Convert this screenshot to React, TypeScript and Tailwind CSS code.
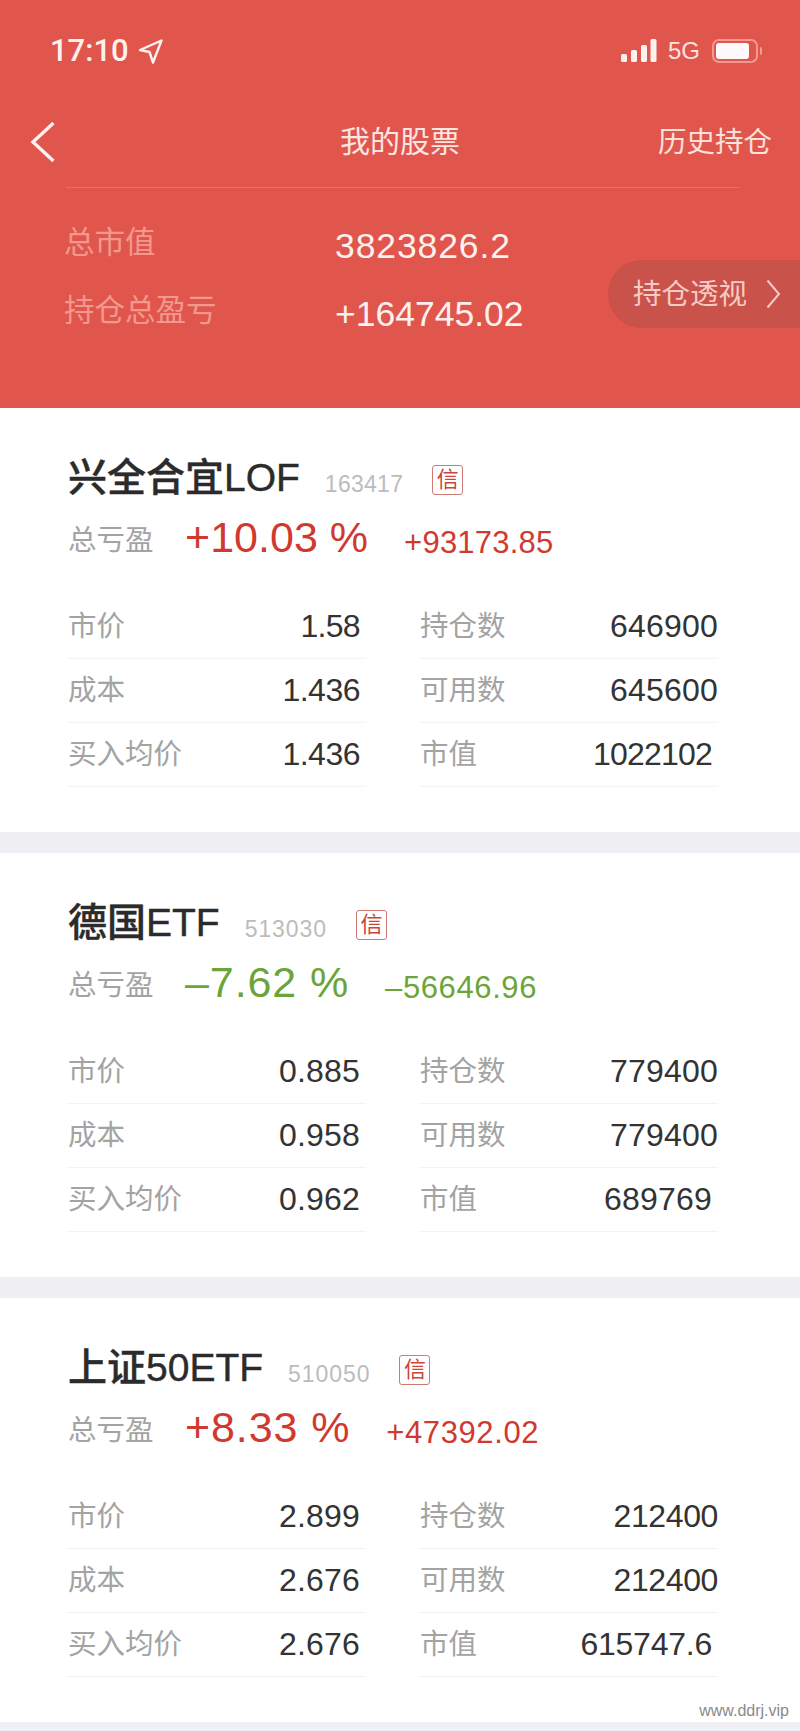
const FONT = "font-['Liberation_Sans','Noto_Sans_CJK_SC',sans-serif]";

type Stock = {
  name: string;
  code: string;
  pct: string;
  amount: string;
  up: boolean;
  rows: [string, string, string, string][];
};

const stocks: Stock[] = [
  {
    name: "兴全合宜LOF",
    code: "163417",
    pct: "+10.03 %",
    amount: "+93173.85",
    up: true,
    rows: [
      ["市价", "1.58", "持仓数", "646900"],
      ["成本", "1.436", "可用数", "645600"],
      ["买入均价", "1.436", "市值", "1022102"],
    ],
  },
  {
    name: "德国ETF",
    code: "513030",
    pct: "–7.62 %",
    amount: "–56646.96",
    up: false,
    rows: [
      ["市价", "0.885", "持仓数", "779400"],
      ["成本", "0.958", "可用数", "779400"],
      ["买入均价", "0.962", "市值", "689769"],
    ],
  },
  {
    name: "上证50ETF",
    code: "510050",
    pct: "+8.33 %",
    amount: "+47392.02",
    up: true,
    rows: [
      ["市价", "2.899", "持仓数", "212400"],
      ["成本", "2.676", "可用数", "212400"],
      ["买入均价", "2.676", "市值", "615747.6"],
    ],
  },
];

// the phone font has a narrow 1, Liberation's digits are all one width,
// so each number gets its spacing from how many 1s it holds
function Num({ value, base, one, className }: { value: string; base: number; one: number; className: string }) {
  const ones = value.split("1").length - 1;
  return (
    <span className={className} style={{ letterSpacing: base - (ones * one) / value.length }}>
      {value}
    </span>
  );
}

function StatusBar() {
  return (
    <div className="flex h-[70px] items-end justify-between pl-[50px] pr-[38px] pb-[7px]">
      <div className="mb-[-4px] flex items-center gap-[9px]">
        <span className="font-['Roboto',sans-serif] text-[31px] leading-[32px] font-medium text-[#fdf1ef]">17:10</span>
        <svg width="25" height="25" viewBox="0 0 25 25" fill="none">
          <path d="M23.5 1.5 L2 11 L11.5 13 L15 23.5 Z" stroke="#fdf1ef" strokeWidth="2.4" strokeLinejoin="round" />
        </svg>
      </div>
      <div className="flex items-center">
        <svg width="36" height="24" viewBox="0 0 36 24" fill="#fdf1ef">
          <rect x="0" y="15" width="6" height="8" rx="1.5" />
          <rect x="10" y="11" width="6" height="12" rx="1.5" />
          <rect x="20" y="6" width="6" height="17" rx="1.5" />
          <rect x="29.5" y="0" width="6" height="23" rx="1.5" />
        </svg>
        <span className="ml-[11px] text-[24px] leading-[24px] text-[#fbe3e0]">5G</span>
        <div className="ml-[12px] flex items-center">
          <div className="h-[24px] w-[46px] rounded-[7px] border-2 border-[#f29a92] p-[2px]">
            <div className="h-full w-[33px] rounded-[3px] bg-[#fffafa]" />
          </div>
          <div className="ml-[2px] h-[8px] w-[2px] rounded-r bg-[#f29a92]" />
        </div>
      </div>
    </div>
  );
}

function Header() {
  return (
    <div className="h-[408px] bg-[#e0564c]">
      <StatusBar />
      <div className="flex h-[117px] items-center justify-between pl-[30px] pr-[28px] pt-[27px]">
        <svg width="26" height="42" viewBox="0 0 26 42" fill="none">
          <path d="M23.5 2 L3 21 L23.5 40" stroke="#fdf1ef" strokeWidth="3.4" />
        </svg>
        <span className="ml-[86px] text-[30px] leading-[40px] text-[#fbe6e3]">我的股票</span>
        <span className="text-[28.5px] leading-[40px] text-[#fbe0dc]">历史持仓</span>
      </div>
      <div className="mx-[66px] h-px w-[674px] bg-[#e76f65]" />
      <div className="flex items-start justify-between pt-[34px] pl-[64px]">
        <div className="flex">
          <div className="flex w-[271px] flex-col gap-[28px] text-[30.5px] leading-[40px] text-[#f3988f]">
            <span>总市值</span>
            <span>持仓总盈亏</span>
          </div>
          <div className="flex flex-col gap-[28px] pt-[4px] text-[35.5px] leading-[40px] text-[#fdf1ef]">
            <Num value="3823826.2" base={0.9} one={9} className="" />
            <Num value="+164745.02" base={0.9} one={9} className="" />
          </div>
        </div>
        <div className="mt-[38px] flex h-[68px] w-[192px] items-center rounded-l-[34px] border border-r-0 border-[#d24e45] bg-[#c9524a] pl-[24px]">
          <span className="text-[28.5px] leading-[36px] text-[#f6cbc6]">持仓透视</span>
          <svg className="ml-[19px]" width="15" height="30" viewBox="0 0 15 30" fill="none">
            <path d="M1.5 1.5 L13 15 L1.5 28.5" stroke="#f6cbc6" strokeWidth="2" />
          </svg>
        </div>
      </div>
    </div>
  );
}

function Cell({ label, value, pad }: { label: string; value: string; pad: boolean }) {
  return (
    <div className="flex h-16 items-center justify-between border-b border-[#f3f3f3] pb-[2px] pl-px">
      <span className="text-[28.5px] leading-[36px] text-[#a3a3a3]">{label}</span>
      <Num
        value={value}
        base={0.2}
        one={3.5}
        className={`text-[32px] leading-[36px] text-[#333333] ${pad ? "pr-[6px]" : ""}`}
      />
    </div>
  );
}

function StockCard({ stock }: { stock: Stock }) {
  const tone = stock.up ? "text-[#d0392f]" : "text-[#6ba539]";
  return (
    <div className="h-[424px] bg-white pl-[67px] pr-[82px] pt-[47px]">
      <div className="flex h-[46px] items-center pl-px">
        <span className="text-[39px] leading-[46px] font-medium text-[#2b2b2b] [-webkit-text-stroke:0.4px_#2b2b2b]">
          {stock.name}
        </span>
        <Num
          value={stock.code}
          base={1.6}
          one={4}
          className="ml-[25px] mt-[12px] text-[23px] leading-[30px] text-[#bcbcbc]"
        />
        <span className="ml-[29px] mt-[3px] flex h-[30px] w-[31px] items-center justify-center rounded-[3px] border border-[#cf7a72] text-[22px] leading-[28px] text-[#c9463c]">
          信
        </span>
      </div>
      <div className="mt-[11px] flex h-[50px] items-center pl-px">
        <span className="mt-[5px] w-[117px] text-[28.5px] leading-[36px] text-[#a3a3a3]">总亏盈</span>
        <Num value={stock.pct} base={0.9} one={7} className={`text-[43px] leading-[50px] ${tone}`} />
        <Num
          value={stock.amount}
          base={0.6}
          one={3.5}
          className={`ml-[36px] mt-[12px] text-[31px] leading-[36px] ${tone}`}
        />
      </div>
      <div className="mt-[33px] grid grid-cols-[299px_299px] gap-x-[53px]">
        {stock.rows.map((r, i) => (
          <div key={r[0]} className="contents">
            <Cell label={r[0]} value={r[1]} pad />
            <Cell label={r[2]} value={r[3]} pad={i === 2} />
          </div>
        ))}
      </div>
    </div>
  );
}

export default function App() {
  return (
    <div className={`relative h-[1731px] w-[800px] overflow-hidden bg-[#efeff4] ${FONT}`}>
      <Header />
      <div className="flex flex-col gap-[21px]">
        {stocks.map((s) => (
          <StockCard key={s.code} stock={s} />
        ))}
      </div>
      <span className="absolute right-[11px] top-[1700px] text-[16px] leading-[22px] text-[#8a8a8a]">www.ddrj.vip</span>
    </div>
  );
}
